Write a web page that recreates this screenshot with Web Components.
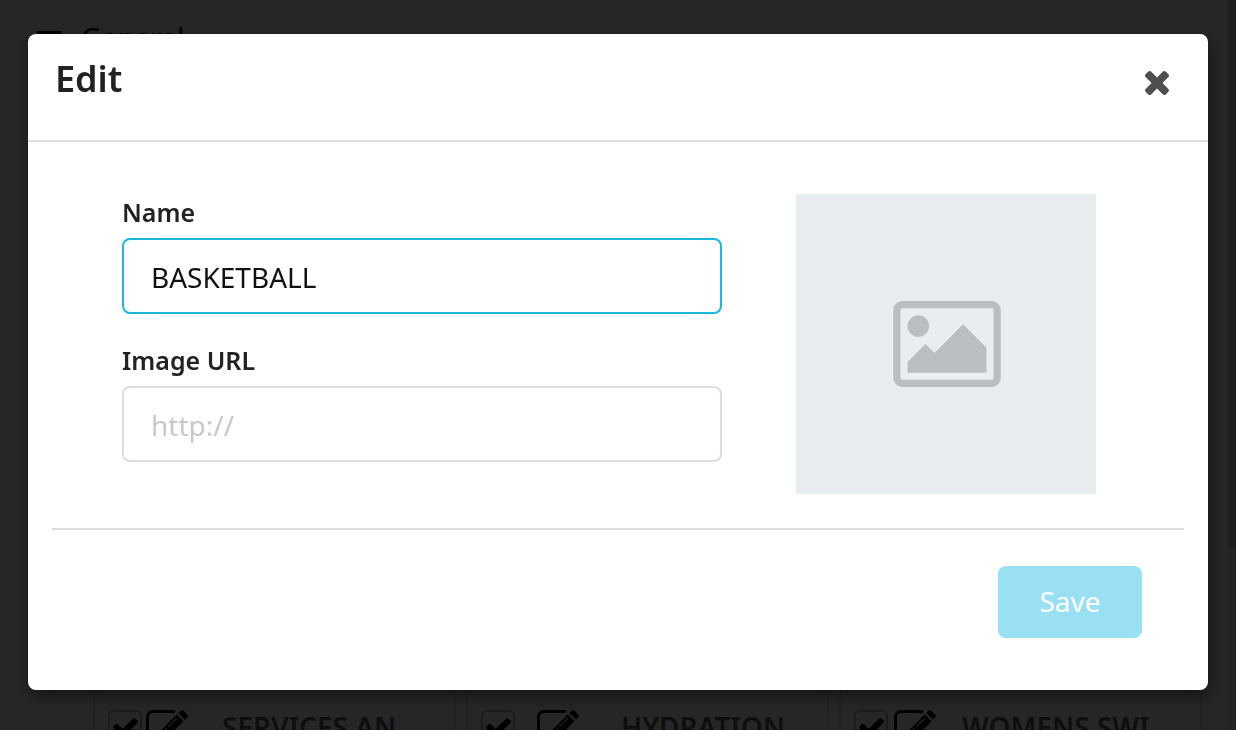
<!DOCTYPE html>
<html lang="en">
<head>
<meta charset="utf-8">
<meta name="viewport" content="width=device-width, initial-scale=1">
<title>Edit</title>
<style>
  html, body { margin: 0; height: 100%; }
  body { overflow: hidden; background: #fff; color: #222; font-family: "Noto Sans", "Open Sans", sans-serif; font-size: 28px; }
</style>
</head>
<body>
<category-page>
  <category-card name="SERVICES AN" style="--tool-gap: 4px; --name-gap: 34px"></category-card>
  <category-card name="HYDRATION" style="--tool-gap: 22px; --name-gap: 42px"></category-card>
  <category-card name="WOMENS SWI" style="--tool-gap: 6px; --name-gap: 26px"></category-card>
</category-page>
<modal-dialog heading="Edit">
  <text-field label="Name" value="BASKETBALL" active></text-field>
  <text-field label="Image URL" placeholder="http://"></text-field>
  <image-preview slot="preview"></image-preview>
  <save-button slot="footer">Save</save-button>
</modal-dialog>

<script>
const ICONS = {
  bars: ['0 0 24 24', 'M0 0h24v4H0zM0 10h24v4H0zM0 20h24v4H0z'],
  times: ['302 366 1188 1188', 'M1490 1322q0 40-28 68l-136 136q-28 28-68 28t-68-28l-294-294-294 294q-28 28-68 28t-68-28l-136-136q-28-28-28-68t28-68l294-294-294-294q-28-28-28-68t28-68l136-136q28-28 68-28t68 28l294 294 294-294q28-28 68-28t68 28l136 136q28 28 28 68t-28 68l-294 294 294 294q28 28 28 68z'],
  check: ['121 334 1550 1188', 'M1671 566q0 40-28 68l-724 724-136 136q-28 28-68 28t-68-28l-136-136-362-362q-28-28-28-68t28-68l136-136q28-28 68-28t68 28l294 295 656-657q28-28 68-28t68 28l136 136q28 28 28 68z'],
  edit: ['0 128 1792 1408', 'M888 1184l116-116-152-152-116 116v56h96v96h56zm440-720q-16-16-33 1l-350 350q-17 17-1 33t33-1l350-350q17-17 1-33zm80 594v190q0 119-84.5 203.5t-203.5 84.5h-832q-119 0-203.5-84.5t-84.5-203.5v-832q0-119 84.5-203.5t203.5-84.5h832q63 0 117 25 15 7 18 23 3 17-9 29l-49 49q-14 14-32 8-23-6-45-6h-832q-66 0-113 47t-47 113v832q0 66 47 113t113 47h832q66 0 113-47t47-113v-126q0-13 9-22l64-64q15-15 35-7t20 29zm-96-738l288 288-672 672h-288v-288zm444 132l-92 92-288-288 92-92q28-28 68-28t68 28l152 152q28 28 28 68t-28 68z'],
  image: ['-64 128 1920 1536', 'M576 576q0 80-56 136t-136 56-136-56-56-136 56-136 136-56 136 56 56 136zm1024 384v448h-1408v-192l320-320 160 160 512-512zm96-704h-1600q-13 0-22.5 9.5t-9.5 22.5v1216q0 13 9.5 22.5t22.5 9.5h1600q13 0 22.5-9.5t9.5-22.5v-1216q0-13-9.5-22.5t-22.5-9.5zm160 32v1216q0 66-47 113t-113 47h-1600q-66 0-113-47t-47-113v-1216q0-66 47-113t113-47h1600q66 0 113 47t47 113z']
};

function define(name, render) {
  customElements.define(name, class extends HTMLElement {
    connectedCallback() {
      if (!this.shadowRoot) this.attachShadow({ mode: 'open' }).innerHTML = render(this);
    }
  });
}

define('glyph-icon', el => {
  const [box, path] = ICONS[el.getAttribute('name')];
  return `<style>
    :host { display: block; flex: none; }
    svg { display: block; width: 100%; height: 100%; fill: currentColor; }
  </style><svg viewBox="${box}" aria-hidden="true"><path d="${path}"/></svg>`;
});

define('category-page', () => `<style>
    :host { display: flex; height: 100vh; overflow: hidden; }
    main { flex: 1; }
    header { display: flex; align-items: flex-end; gap: 20px; padding: 19px 37px 0; color: #000; line-height: 36px; }
    h2 { margin: 0; font-size: 28px; font-weight: 400; }
    .bars { width: 24px; height: 24px; }
    .cards { display: grid; grid-template-columns: repeat(3, 1fr); gap: 10px; margin: 633px 26px 0 93px; }
    .track { width: 8px; background: #e8e8e8; }
    .thumb { height: 75%; border-radius: 0 0 4px 4px; background: #c8c8c8; }
  </style>
  <main>
    <header><glyph-icon class="bars" name="bars"></glyph-icon><h2>General</h2></header>
    <div class="cards"><slot></slot></div>
  </main>
  <div class="track"><div class="thumb"></div></div>`);

define('category-card', el => `<style>
    :host { display: flex; align-items: flex-start; box-sizing: border-box; height: 140px; padding: 20px 13px; border: 2px solid #dadada; border-radius: 8px; color: #000; }
    label { display: grid; place-items: center; box-sizing: border-box; width: 34px; height: 34px; border: 2px solid #b4b4b4; border-radius: 6px; }
    input { appearance: none; grid-area: 1 / 1; width: 30px; height: 30px; margin: 0; }
    .check { grid-area: 1 / 1; width: 25px; height: 19px; }
    button { margin: 0 0 0 var(--tool-gap); padding: 0; border: 0; background: none; color: inherit; }
    .edit { width: 42px; height: 33px; }
    span { margin-left: var(--name-gap); color: #606060; font-size: 28px; font-weight: 600; line-height: 34px; white-space: nowrap; }
  </style>
  <label><input type="checkbox" checked aria-label="${el.getAttribute('name')}"><glyph-icon class="check" name="check"></glyph-icon></label>
  <button aria-label="Edit category"><glyph-icon class="edit" name="edit"></glyph-icon></button>
  <span>${el.getAttribute('name')}</span>`);

define('modal-dialog', el => `<style>
    :host { display: block; position: fixed; inset: 0; overflow: hidden; background: rgba(0, 0, 0, .85); }
    section { margin: 34px 28px; border-radius: 8px; background: #fff; box-shadow: 2px 6px 18px 0 rgba(0, 0, 0, .5); }
    header { display: flex; justify-content: space-between; align-items: flex-start; padding: 20px 39px 36px 27px; border-bottom: 2px solid #ddd; }
    h1 { margin: 0; font-size: 36px; font-weight: 600; line-height: 50px; }
    button { margin: 17px 0 0; padding: 0; border: 0; background: none; color: #4f4f4f; }
    .times { width: 24px; height: 24px; }
    .body { display: flex; align-items: flex-start; gap: 74px; padding: 52px 112px 34px 94px; }
    .fields { flex: 1; display: grid; gap: 28px; }
    footer { display: flex; justify-content: flex-end; margin: 0 24px; padding: 36px 42px 52px; border-top: 2px solid #ddd; }
  </style>
  <section role="dialog" aria-modal="true" aria-labelledby="title">
    <header><h1 id="title">${el.getAttribute('heading')}</h1><button aria-label="Close"><glyph-icon class="times" name="times"></glyph-icon></button></header>
    <div class="body"><div class="fields"><slot></slot></div><slot name="preview"></slot></div>
    <footer><slot name="footer"></slot></footer>
  </section>`);

define('text-field', el => `<style>
    :host { display: block; }
    label { display: block; padding-bottom: 8px; font-size: 25px; font-weight: 600; line-height: 36px; }
    input { display: block; box-sizing: border-box; width: 100%; height: 76px; padding: 2px 27px 0; border: 2px solid #ddd; border-radius: 8px; outline: 0; background: #fff; color: #111; font: 28px/38px "Noto Sans", "Open Sans", sans-serif; }
    input::placeholder { color: #c6c9ca; opacity: 1; }
    :host([active]) input { border-color: #1bb8dc; }
  </style>
  <label for="field">${el.getAttribute('label')}</label>
  <input id="field" type="text" value="${el.getAttribute('value') || ''}" placeholder="${el.getAttribute('placeholder') || ''}">`);

define('image-preview', () => `<style>
    :host { display: grid; place-items: center; box-sizing: border-box; flex: none; width: 300px; height: 300px; padding-left: 2px; background: #e8edf0; color: #babec1; }
    .image { width: 108px; height: 86px; }
  </style><glyph-icon class="image" name="image"></glyph-icon>`);

define('save-button', () => `<style>
    :host { display: block; }
    button { display: block; min-width: 144px; height: 72px; padding: 0 40px 2px; border: 0; border-radius: 8px; background: #99e0f2; color: #fff; font: 28px/38px "Noto Sans", "Open Sans", sans-serif; }
  </style><button type="submit" disabled><slot></slot></button>`);
</script>
</body>
</html>
